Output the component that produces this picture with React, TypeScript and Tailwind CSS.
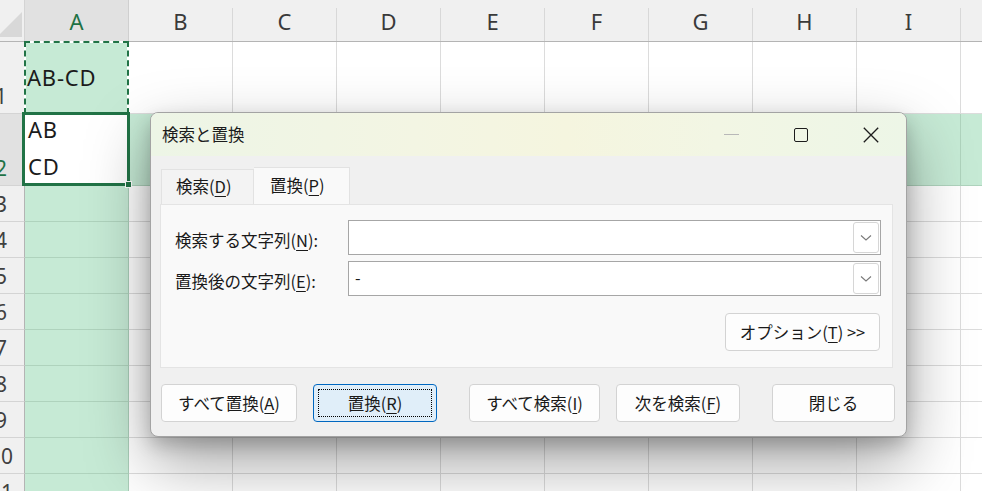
import React from "react";

const JP = { fontFamily: '"Noto Sans CJK JP", "Noto Sans", sans-serif' };
const LATIN = { fontFamily: '"Noto Sans", "Noto Sans CJK JP", sans-serif' };

const OTHER_COLS = ["B", "C", "D", "E", "F", "G", "H", "I", ""];

const ROWS = [
  { n: 1, h: "h-[72px]" },
  { n: 2, h: "h-[72px]" },
  ...[3, 4, 5, 6, 7, 8, 9, 10, 11].map((n) => ({ n, h: "h-[36px]" })),
];

function Key({ k }: { k: string }) {
  return <span className="underline decoration-1 underline-offset-[3px]">{k}</span>;
}

function RowHeader({ n, active }: { n: number; active: boolean }) {
  return (
    <div
      className={`w-[25px] shrink-0 overflow-hidden border-r border-b border-r-[#b4b4b4] border-b-[#d4d4d4] ${
        active ? "bg-[#e1e1e1]" : "bg-[#f0f0f0]"
      }`}
    >
      <div
        className={`ml-[-23px] flex h-full w-[48px] items-end justify-center pb-[6px] text-[21px] leading-none ${
          active ? "text-[#1e7145]" : "text-[#404040]"
        }`}
      >
        {n}
      </div>
    </div>
  );
}

function SheetRow({ n, h }: { n: number; h: string }) {
  const rowSelected = n === 2;
  return (
    <div className={`flex ${h}`}>
      <RowHeader n={n} active={rowSelected} />
      {n === 1 ? (
        <div className="relative w-[104px] shrink-0 border-r border-b border-[#afd3bd] bg-[#c6ead5]">
          <div className="absolute inset-[1px] flex items-center bg-[#c6ead5] pl-[1px] text-[22px] tracking-[0.8px] text-[#1b1b1b]" style={LATIN}>
            AB-CD
          </div>
          {/* copy marquee: white base, green dashes on top */}
          <div className="absolute -top-px -left-px -right-px -bottom-px border-2 border-white" />
          <div className="absolute -top-px -left-px -right-px -bottom-px border-2 border-dashed border-[#217346]" />
        </div>
      ) : n === 2 ? (
        <div className="relative w-[104px] shrink-0 border-r border-b border-[#d4d4d4] bg-white">
          <div className="flex h-full flex-col justify-end pl-[3px] text-[22px] leading-[37px] tracking-[0.8px] text-[#1b1b1b]" style={LATIN}>
            <span>AB</span>
            <span>CD</span>
          </div>
          <div className="absolute -top-[2px] -left-[3px] -right-[2px] -bottom-[1px] border-[3px] border-[#217346]" />
          <div className="absolute -right-[4px] -bottom-[3px] h-[7px] w-[7px] border border-white bg-[#217346]" />
        </div>
      ) : (
        <div className="w-[104px] shrink-0 border-r border-b border-r-[#a9cdb8] border-b-[#afd3bd] bg-[#c6ead5]" />
      )}
      {OTHER_COLS.map((c, i) => (
        <div
          key={i}
          className={`w-[104px] shrink-0 border-r border-b ${
            rowSelected ? "border-[#afd3bd] bg-[#c6ead5]" : "border-[#dcdcdc] bg-white"
          }`}
        />
      ))}
    </div>
  );
}

function Sheet() {
  return (
    <div className="flex flex-col" style={LATIN}>
      <div className="flex h-[42px] border-b border-[#b4b4b4] bg-[#f0f0f0]">
        <div className="w-[25px] shrink-0 border-r border-[#d4d4d4]">
          <svg width="25" height="41" viewBox="0 0 25 41">
            <polygon points="22,12 22,37 -3,37" fill="#d8d8d8" />
          </svg>
        </div>
        <div className="flex w-[104px] shrink-0 items-center justify-center border-r border-[#cfcfcf] bg-[#e1e1e1] pt-[2px] text-[22px] text-[#1e7145]">
          A
        </div>
        {OTHER_COLS.map((c, i) => (
          <div
            key={i}
            className="mt-[8px] flex w-[104px] shrink-0 items-center justify-center border-r border-[#d8d8d8] pb-[6px] text-[22px] text-[#3a3a3a]"
          >
            {c}
          </div>
        ))}
      </div>
      {ROWS.map((r) => (
        <SheetRow key={r.n} n={r.n} h={r.h} />
      ))}
    </div>
  );
}

function Btn({
  children,
  w,
  focused,
  className = "",
}: {
  children: React.ReactNode;
  w: string;
  focused?: boolean;
  className?: string;
}) {
  if (focused) {
    return (
      <div className={`${w} ${className} h-[38px] shrink-0 rounded-[4px] border border-[#0067c0] bg-[#e0eef9] p-[4px]`}>
        <div className="flex h-full items-center justify-center border border-dotted border-black text-[16.5px] text-[#1a1a1a]">
          {children}
        </div>
      </div>
    );
  }
  return (
    <div
      className={`${w} ${className} flex h-[38px] shrink-0 items-center justify-center rounded-[4px] border border-[#d3d3d3] bg-[#fdfdfd] text-[16.5px] text-[#1a1a1a]`}
    >
      {children}
    </div>
  );
}

function Combo({ value }: { value?: string }) {
  return (
    <div className="flex h-[35px] w-[533px] items-center border border-[#a6a6a6] bg-white p-[1px]">
      <div className="flex-1 pl-[5px] pb-[3px] text-[16px] text-[#1a1a1a]">{value}</div>
      <div className="flex h-[31px] w-[26px] items-center justify-center rounded-[3px] border border-[#d6d6d6] bg-white">
        <svg width="12" height="8" viewBox="0 0 12 8">
          <path d="M1 1.5 L6 6 L11 1.5" fill="none" stroke="#7a7a7a" strokeWidth="1.1" />
        </svg>
      </div>
    </div>
  );
}

function Dialog() {
  return (
    <div
      className="absolute left-[150px] top-[112px] flex h-[325px] w-[757px] flex-col overflow-hidden rounded-[8px] border border-[#a3a3a3] bg-[#f0f0f0] shadow-[0_8px_18px_rgba(0,0,0,0.2),0_26px_64px_rgba(0,0,0,0.36)]"
      style={JP}
    >
      {/* title bar */}
      <div className="flex h-[43px] shrink-0 items-center bg-[linear-gradient(90deg,#edf5e6_0%,#f3f5e3_35%,#f5f5df_55%,#f2f6e4_75%,#edf6e7_100%)]">
        <div className="flex-1 pl-[11px] text-[16.5px] text-[#1c1c1c]">検索と置換</div>
        <div className="flex h-full w-[70px] items-center justify-center">
          <div className="h-px w-[15px] bg-[#b8b8b8]" />
        </div>
        <div className="flex h-full w-[70px] items-center justify-center">
          <div className="h-[14px] w-[14px] rounded-[2px] border-[1.4px] border-[#1c1c1c]" />
        </div>
        <div className="flex h-full w-[70px] items-center justify-center pr-px">
          <svg width="16" height="16" viewBox="0 0 16 16">
            <path d="M0.8 0.8 L15.2 15.2 M15.2 0.8 L0.8 15.2" stroke="#1c1c1c" strokeWidth="1.3" />
          </svg>
        </div>
      </div>

      {/* tabs */}
      <div className="flex h-[48px] shrink-0 items-end pl-[10px] pr-[12px]">
        <div className="flex h-[35px] w-[93px] items-center border border-b-0 border-[#e2e2e2] bg-[#f3f3f3] pl-[14px] pb-[2px] text-[16.5px] text-[#1a1a1a]">
          検索(<Key k="D" />)
        </div>
        <div className="flex h-[37px] w-[96px] items-center border border-b-0 border-l-0 border-[#e2e2e2] bg-[#f9f9f9] pl-[16px] pb-[2px] text-[16.5px] text-[#1a1a1a]">
          置換(<Key k="P" />)
        </div>
      </div>

      {/* panel */}
      <div className="ml-[9px] mr-[13px] flex h-[164px] shrink-0 flex-col border border-[#e4e4e4] bg-[#f9f9f9] pl-[14px] pr-[11px] pt-[15px]">
        <div className="flex items-center justify-between">
          <div className="pt-[5px] text-[16.5px] text-[#1a1a1a]">
            検索する文字列(<Key k="N" />):
          </div>
          <Combo />
        </div>
        <div className="mt-[6px] flex items-center justify-between">
          <div className="pt-[5px] text-[16.5px] text-[#1a1a1a]">
            置換後の文字列(<Key k="E" />):
          </div>
          <Combo value="-" />
        </div>
        <div className="mt-[17px] flex justify-end pr-[1px]">
          <Btn w="w-[155px]">
            <span>
              オプション(<Key k="T" />) &gt;&gt;
            </span>
          </Btn>
        </div>
      </div>

      {/* bottom buttons */}
      <div className="mt-[16px] flex pl-[10px]">
        <Btn w="w-[136px]">
          <span>
            すべて置換(<Key k="A" />)
          </span>
        </Btn>
        <Btn w="w-[124px]" focused className="ml-[16px]">
          <span>
            置換(<Key k="R" />)
          </span>
        </Btn>
        <Btn w="w-[131px]" className="ml-[32px]">
          <span>
            すべて検索(<Key k="I" />)
          </span>
        </Btn>
        <Btn w="w-[124px]" className="ml-[16px]">
          <span>
            次を検索(<Key k="F" />)
          </span>
        </Btn>
        <Btn w="w-[123px]" className="ml-[32px]">
          閉じる
        </Btn>
      </div>
    </div>
  );
}

export default function App() {
  return (
    <div className="relative h-[491px] w-[982px] overflow-hidden bg-white">
      <Sheet />
      <Dialog />
    </div>
  );
}
